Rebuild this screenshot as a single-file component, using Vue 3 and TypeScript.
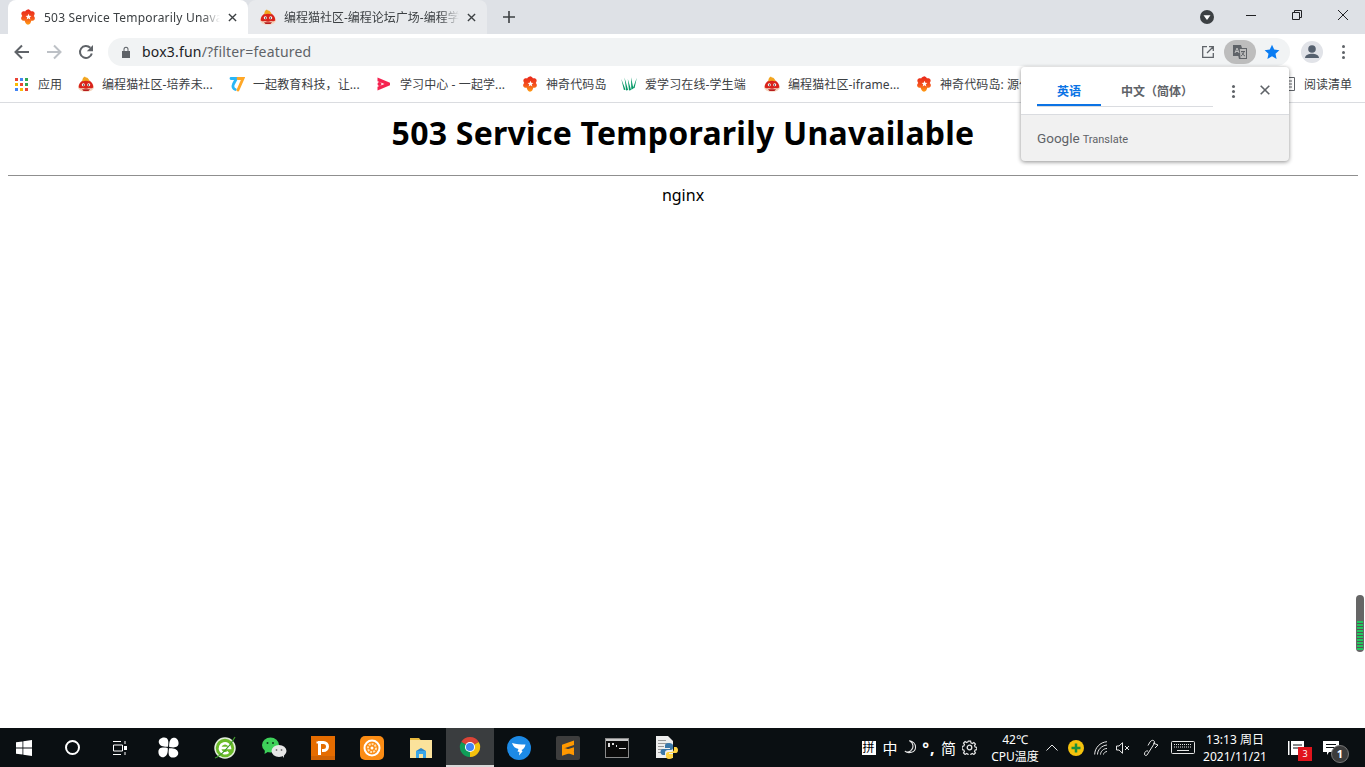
<template>
  <div class="screen">
    <svg class="defs" width="0" height="0" aria-hidden="true">
      <defs>
        <linearGradient id="flowerFill" x1="0" y1="0" x2="0" y2="1">
          <stop offset="0" stop-color="#e8261a" />
          <stop offset="0.55" stop-color="#f4511e" />
          <stop offset="1" stop-color="#ff9d12" />
        </linearGradient>
        <symbol id="flower" viewBox="0 0 16 16">
          <path fill="url(#flowerFill)" d="M8 .3c1.500 0 2.300 1 2.900 2 1.300-.3 2.800-.1 3.500 1.200.6 1.200.1 2.400-.6 3.400.8.900 1.500 2.200.8 3.500-.6 1.200-2 1.500-3.300 1.300C10.900 13.400 10 15.700 8 15.700s-3-2.300-3.300-3.900c-1.300.2-2.700-.1-3.300-1.300-.7-1.300 0-2.600.8-3.500-.7-1-1.200-2.200-.6-3.400.7-1.300 2.200-1.500 3.500-1.200.6-1 1.400-2 2.900-2z" />
          <path fill="#fff" d="M8.500 4.800l.8 1.900 2.100.2-1.600 1.400.5 2.100-1.800-1.100-1.800 1.100.5-2.100L5.600 7l2.100-.2z" />
        </symbol>
        <symbol id="cat" viewBox="0 0 16 16">
          <ellipse cx="8" cy="11" rx="8" ry="4.800" fill="#f4d3bb" />
          <path fill="#d9231b" d="M.8 11.500C.6 7.200 3.500 4 8 4s7.400 3.200 7.200 7.500c-1.300.9-3 1-4.200.6-.9.500-1.800.7-3 .7s-2.100-.2-3-.7c-1.200.4-2.900.3-4.200-.6z" />
          <path fill="#f2a51f" d="M4.500 5.500C4 3.500 5 1 7 .4c.2.700.6 1 1.200 1.100C9.800 1.700 11 3 11.500 5.500c-2-1-5-1-7 0z" />
          <circle cx="5.300" cy="8.800" r="1.500" fill="#fff" />
          <circle cx="10.700" cy="8.800" r="1.500" fill="#fff" />
          <circle cx="5.500" cy="9" r=".7" fill="#222" />
          <circle cx="10.500" cy="9" r=".7" fill="#222" />
          <path fill="#b71c1c" d="M4 13.300h8l-1.500 1.700h-5z" />
        </symbol>
        <symbol id="seventeen" viewBox="0 0 16 16">
          <path fill="none" stroke="#29b6f6" stroke-width="2.800" stroke-linecap="round" d="M2 2.500h5.500L4.500 8c-1.300 2.700-.2 5 1.800 5.500" />
          <path fill="none" stroke="#ffa726" stroke-width="2.800" stroke-linecap="round" d="M9 2.500h5L9 14" />
        </symbol>
        <symbol id="play" viewBox="0 0 16 16">
          <path fill="#f5224f" d="M1.500 1.500l12.500 5.200v2.600L1.500 14.500v-3.700l7-2.800-7-2.800z" />
          <circle cx="3.500" cy="8" r="2" fill="#f5224f" />
        </symbol>
        <symbol id="grass" viewBox="0 0 16 16">
          <path fill="#079a68" d="M.3 3l2.600 11 1.700-.3zM3.500 1.500l1.600 13 2-.4zM6.800 3l1.200 11.500 2.100-.6zM10 1.200l.3 12.500 2.100-1.300zM15.800 1.800l-4 10.800 1.800-.7z" />
        </symbol>
      </defs>
    </svg>

    <header class="tabstrip">
      <div class="tab active">
        <svg class="favicon"><use href="#flower" /></svg>
        <span class="tab-title">503 Service Temporarily Unavailable</span>
        <svg class="tab-close" viewBox="0 0 10 10"><path d="M1 1l8 8M9 1L1 9" /></svg>
      </div>
      <div class="tab">
        <svg class="favicon"><use href="#cat" /></svg>
        <span class="tab-title">编程猫社区-编程论坛广场-编程学习交流</span>
        <svg class="tab-close" viewBox="0 0 10 10"><path d="M1 1l8 8M9 1L1 9" /></svg>
      </div>
      <svg class="new-tab" viewBox="0 0 12 12"><path d="M6 0v12M0 6h12" /></svg>
      <div class="window-controls">
        <svg class="profile-drop" viewBox="0 0 14 14">
          <circle cx="7" cy="7" r="7" fill="#3c4043" />
          <path d="M3.500 5.200h7L7 10z" fill="#fff" />
        </svg>
        <span class="win-btn"><svg viewBox="0 0 10 10"><path d="M0 5.500h10" /></svg></span>
        <span class="win-btn"><svg viewBox="0 0 10 10"><path d="M.5 2.500h7v7h-7zM2.500 2.500v-2h7v7h-2" /></svg></span>
        <span class="win-btn"><svg viewBox="0 0 10 10"><path d="M0 0l10 10M10 0L0 10" /></svg></span>
      </div>
    </header>

    <div class="toolbar">
      <svg class="nav-icon" viewBox="0 0 16 16"><path stroke="#5f6368" d="M15 8H2M8 1.500L1.500 8 8 14.500" /></svg>
      <svg class="nav-icon" viewBox="0 0 16 16"><path stroke="#bdc1c6" d="M1 8h13M8 1.500L14.500 8 8 14.500" /></svg>
      <svg class="nav-icon" viewBox="0 0 16 16">
        <path stroke="#5f6368" d="M13.800 9.500A6 6 0 1 1 12.300 3.800" />
        <path fill="#5f6368" d="M15 1v6.200H8.800z" />
      </svg>
      <div class="omnibox">
        <svg class="lock" viewBox="0 0 10 12">
          <path fill="#5f6368" d="M1 5h8v7H1zM2.500 5V3.300a2.500 2.500 0 0 1 5 0V5H6.500V3.300a1.500 1.500 0 0 0-3 0V5z" />
        </svg>
        <span class="url"><b>box3.fun</b>/?filter=featured</span>
        <svg class="open-ext" viewBox="0 0 12 12">
          <path d="M5 .7H.7v10.600h10.600V7M7 .7h4.300V5M11 1L5 7" />
        </svg>
        <span class="translate-chip">
          <svg viewBox="0 0 16 16">
            <path fill="#5f6368" d="M1 1h8l1 3h5v11H7l-.7-3H1z" />
            <path fill="#bdbdbd" d="M7.800 5H14v9H8.500z" />
            <path fill="none" stroke="#5f6368" d="M9 7.500h4M12 7.500c-.4 2-1.500 3.500-3 4.500M10 8.500c.5 1.500 1.500 2.800 3 3.500" />
            <path fill="none" stroke="#bdbdbd" d="M3 9l2-5 2 5M3.600 7.500h2.800" />
          </svg>
        </span>
        <svg class="star" viewBox="0 0 16 16"><path d="M8 .8l2.200 4.800 5.200.6-3.900 3.500 1.100 5.200L8 12.300l-4.600 2.600 1.100-5.200L.6 6.200l5.200-.6z" /></svg>
      </div>
      <span class="avatar">
        <svg viewBox="0 0 22 22">
          <circle cx="11" cy="8" r="3.800" fill="#55606e" />
          <path fill="#55606e" d="M4 17c0-3 4-4.300 7-4.300s7 1.300 7 4.300z" />
        </svg>
      </span>
      <span class="dots"><i /><i /><i /></span>
    </div>

    <nav class="bookmarks">
      <svg class="apps" viewBox="0 0 13 13">
        <rect v-for="c in appCells" :key="c.k" :x="c.x" :y="c.y" width="3" height="3" :fill="c.fill" />
      </svg>
      <span class="apps-label">应用</span>
      <span v-for="b in bookmarks" :key="b.text" class="bookmark" :style="{ width: b.width + 'px' }">
        <svg class="favicon"><use :href="'#' + b.icon" /></svg>
        <span class="bookmark-text">{{ b.text }}</span>
      </span>
      <span class="reading">
        <svg viewBox="0 0 12 14"><path d="M.5.500h11v13H.500M3 4h6M3 7h6M3 10h6" /></svg>
        阅读清单
      </span>
    </nav>

    <main class="page">
      <h1>503 Service Temporarily Unavailable</h1>
      <hr />
      <p>nginx</p>

      <aside class="translate-popup">
        <div class="popup-top">
          <div class="lang-tabs">
            <span class="lang current">英语</span>
            <span class="lang">中文（简体）</span>
          </div>
          <span class="dots small"><i /><i /><i /></span>
          <svg class="popup-close" viewBox="0 0 10 10"><path d="M.7.700l8.600 8.600M9.300.700L.7 9.300" /></svg>
        </div>
        <div class="popup-bottom"><span class="g">Google</span><span class="t">Translate</span></div>
      </aside>

      <div class="scroll-widget"><span class="stripes" /></div>
    </main>

    <footer class="taskbar">
      <div class="task-group first">
        <span class="task">
          <svg width="16" height="16" viewBox="0 0 16 16"><path fill="#fff" d="M0 2.300l6.500-.9v6.200H0zM7.300 1.300L16 0v7.600H7.300zM0 8.400h6.500v6.200L0 13.700zM7.300 8.400H16V16l-8.700-1.300z" /></svg>
        </span>
        <span class="task"><span class="cortana" /></span>
        <span class="task">
          <svg width="16" height="16" viewBox="0 0 16 16"><path fill="none" stroke="#fff" d="M1 1.500h8M1 14.500h8M1.500 5h9v6h-9zM13 1v3M13 12v3" /><path fill="#fff" d="M12 6h3v4h-3z" /></svg>
        </span>
        <span class="task">
          <svg width="21" height="21" viewBox="0 0 20 20" fill="#fff">
            <path d="M9.500 9.300C6 9.600 1.800 9 .8 5.500.2 2.500 2.800.3 6 .4c3.200.1 4.700 2.500 3.500 8.900z" />
            <path d="M9.500 9.300C6 9.600 1.800 9 .8 5.500.2 2.500 2.800.3 6 .4c3.200.1 4.700 2.500 3.500 8.900z" transform="rotate(90 10 10)" />
            <path d="M9.500 9.300C6 9.600 1.800 9 .8 5.500.2 2.500 2.800.3 6 .4c3.200.1 4.700 2.500 3.500 8.900z" transform="rotate(180 10 10)" />
            <path d="M9.500 9.300C6 9.600 1.800 9 .8 5.500.2 2.500 2.800.3 6 .4c3.200.1 4.700 2.500 3.500 8.900z" transform="rotate(270 10 10)" />
          </svg>
        </span>
      </div>
      <div class="task-group second">
        <span class="task">
          <svg width="24" height="24" viewBox="0 0 24 24">
            <circle cx="12" cy="12" r="10" fill="#6cbb2a" stroke="#e3efdc" stroke-width="1.500" />
            <path fill="none" stroke="#fff" stroke-width="2.600" d="M7 12h10a5 5 0 1 0-1.700 4" />
            <path fill="none" stroke="#3f9a2c" stroke-width="1.200" d="M2 22c4-1 15-11 20-21" />
          </svg>
        </span>
        <span class="task">
          <svg width="26" height="24" viewBox="0 0 26 24">
            <ellipse cx="9.500" cy="9" rx="8.500" ry="7.500" fill="#3ed15a" />
            <path fill="#3ed15a" d="M4 14l-.5 4 4-2.500z" />
            <ellipse cx="18" cy="15" rx="7.500" ry="6" fill="#e6e6e6" />
            <path fill="#e6e6e6" d="M21 19l2 3-.2-5z" />
            <circle cx="6.500" cy="7" r="1" fill="#0b3d18" /><circle cx="12" cy="7" r="1" fill="#0b3d18" />
            <circle cx="15.500" cy="14" r=".9" fill="#777" /><circle cx="20.500" cy="14" r=".9" fill="#777" />
          </svg>
        </span>
        <span class="task">
          <svg width="24" height="24" viewBox="0 0 24 24">
            <rect width="24" height="24" fill="#e56c00" />
            <rect y="20" width="24" height="4" fill="#cf6204" />
            <path fill="none" stroke="#fff" stroke-width="3" d="M8.500 19V6.500h4a4 4 0 0 1 0 8H11" />
            <path fill="#fff" d="M5.500 5.500h4v2h-4z" />
          </svg>
        </span>
        <span class="task">
          <svg width="24" height="24" viewBox="0 0 24 24">
            <rect width="24" height="24" rx="5" fill="#fb8c14" />
            <circle cx="12" cy="12" r="7.500" fill="none" stroke="#fff" stroke-width="2" />
            <circle cx="12" cy="12" r="4" fill="none" stroke="#ffe0b2" stroke-width="2" stroke-dasharray="2 1" />
            <circle cx="12" cy="12" r="1.500" fill="#fff" />
          </svg>
        </span>
        <span class="task">
          <svg width="24" height="22" viewBox="0 0 24 22">
            <path fill="#e8b93e" d="M1 1h9l2 2.500H1z" />
            <path fill="#fbe29b" d="M1 3h22v18H1z" />
            <path fill="#3aa6e8" d="M7 14h10v7H7z" />
            <path fill="#fbe29b" d="M10 17h4v4h-4z" />
            <path fill="#2c86cc" d="M7 14l5-3 5 3z" />
          </svg>
        </span>
        <span class="task running">
          <svg width="22" height="22" viewBox="0 0 24 24">
            <path fill="#db4437" d="M12 12L2.470 6.500A11 11 0 0 1 21.530 6.500z" />
            <path fill="#f4c20d" d="M12 12L2.470 6.500A11 11 0 0 1 21.530 6.500z" transform="rotate(120 12 12)" />
            <path fill="#0f9d58" d="M12 12L2.470 6.500A11 11 0 0 1 21.530 6.500z" transform="rotate(240 12 12)" />
            <circle cx="12" cy="12" r="5.500" fill="#fff" />
            <circle cx="12" cy="12" r="4.400" fill="#4285f4" />
          </svg>
        </span>
        <span class="task">
          <svg width="24" height="24" viewBox="0 0 24 24">
            <circle cx="12" cy="12" r="12" fill="#1c8ae6" />
            <path fill="#fff" d="M5 7c4 1.500 8.500 1.500 13.500 1.500-.5 3-2 4.500-4 5.500l1 1.500-3.500 4 .5-3.500-2-.5 1-2.500C8.500 12.500 6 10.500 5 7z" />
          </svg>
        </span>
        <span class="task">
          <svg width="24" height="24" viewBox="0 0 24 24">
            <rect width="24" height="24" rx="2" fill="#3d3d3d" />
            <path fill="#ff9800" d="M18 4.500v4.500L6 13V8.700zM6 11l12 4.200v4L6 15.300zM6 15l12-3.800v4.500L6 19.800z" />
          </svg>
        </span>
        <span class="task">
          <svg width="24" height="20" viewBox="0 0 24 20">
            <rect x=".5" y=".5" width="23" height="19" fill="#0a0a0a" stroke="#8a8a8a" />
            <path fill="#c9c9c9" d="M1 1h22v2H1z" />
            <path fill="#ddd" d="M3 5h2v4H3zM7 5h2v2H7zM11 7h1v2h-1zM14 10h7v1h-7z" />
          </svg>
        </span>
        <span class="task">
          <svg width="24" height="24" viewBox="0 0 24 24">
            <path fill="#eee" d="M2 0h12l5 5v17H2z" />
            <path fill="#999" d="M4 4h8v1H4zM4 7h10v1H4zM4 10h6v1H4zM4 13h6v1H4zM4 16h6v1H4z" />
            <path fill="#3b77a8" d="M15 7c-3 0-4 1-4 2.500V12h5v1H9c-2 0-2.500 1.500-2.500 3s1 3 2.500 3h2v-2.500c0-1.500 1-2.500 3-2.500h3c1 0 2-1 2-2V9.500C19 8 17.500 7 15 7z" />
            <path fill="#ffd343" d="M15 23c3 0 4-1 4-2.500v-2.500h-4v-1h7c1.500 0 2-1.500 2-3s-1-3-2-3h-2v2.500c0 1.500-1 2.500-3 2.500h-3c-1 0-2 1-2 2v2.500c0 1.500 1 2.500 3 2.500z" />
          </svg>
        </span>
      </div>

      <div class="tray">
        <span class="ime-box">拼</span>
        <span class="ime">中</span>
        <svg class="tray-icon" width="13" height="15" viewBox="0 0 12 14"><path d="M5 .7c4 2 4.500 7 1 9.500-2 1.300-4 1.200-5.300.2 3.300 2.800 10 1.300 10-3.700 0-3-2.500-5.500-5.700-6z" /></svg>
        <span class="ime punct">°,</span>
        <span class="ime">简</span>
        <svg class="tray-icon gear" width="15" height="15" viewBox="0 0 15 15">
          <circle cx="7.500" cy="7.500" r="2.300" />
          <path d="M6.300.7h2.400l.4 1.800 1.500.7 1.600-1 1.700 1.700-1 1.600.7 1.500 1.800.4v2.400l-1.800.4-.7 1.500 1 1.600-1.700 1.700-1.600-1-1.500.7-.4 1.800H6.300l-.4-1.800-1.500-.7-1.600 1-1.700-1.700 1-1.600-.7-1.500-1.800-.4V6.300l1.800-.4.700-1.500-1-1.600 1.700-1.700 1.600 1 1.500-.7z" transform="translate(.5 .5) scale(.93)" />
        </svg>
        <span class="temp"><span>42℃</span><span>CPU温度</span></span>
        <svg class="tray-icon" width="12" height="7" viewBox="0 0 12 7"><path d="M.5 6.500L6 1l5.500 5.500" /></svg>
        <svg width="16" height="16" viewBox="0 0 16 16">
          <circle cx="8" cy="8" r="8" fill="#f4c20d" />
          <path stroke="#1a8f3c" stroke-width="2.500" fill="none" d="M8 3.500v9M3.500 8h9" />
        </svg>
        <svg class="tray-icon" width="14" height="14" viewBox="0 0 14 14"><path d="M.7 13.500C.7 7 6 1.200 13 .7M3.500 13.500C3.500 9 7.500 4.500 13 4M6.500 13.500c0-3 3-6 6.500-6M9.500 13.500c0-1.500 2-3 3.500-3" /></svg>
        <svg class="tray-icon" width="14" height="12" viewBox="0 0 14 12"><path d="M.5 4h2.500L6.500.7v10.600L3 8H.5zM9 4l4 4M13 4l-4 4" /></svg>
        <svg class="tray-icon" width="16" height="18" viewBox="0 0 16 18"><path d="M5 12c-2-.5-3.500 1-3.500 3 0 1.500 1.500 2 2.500 1l7-11c1-1.500.5-3-.5-3.500S8 1.500 7 3L5 6.500M10 4l5 2-3 3" /></svg>
        <svg class="tray-icon" width="24" height="13" viewBox="0 0 24 13">
          <rect x=".5" y=".5" width="23" height="12" rx="1" />
          <path stroke-dasharray="1 1" d="M3 3.500h18M3 6h18" />
          <path d="M6 9.500h12" />
        </svg>
        <span class="clock"><span>13:13 周日</span><span>2021/11/21</span></span>
        <span class="notif">
          <svg width="16" height="16" viewBox="0 0 16 16"><path fill="#fff" d="M3 1h13v14H3zM0 1h1.500v14H0z" /><path stroke="#0a0f12" d="M5 5h9M5 8h9" /></svg>
          <span class="red-badge">3</span>
        </span>
        <span class="notif last">
          <svg width="16" height="16" viewBox="0 0 16 16"><path fill="#fff" d="M0 1h16v11H6l-2 3v-3H0z" /><path stroke="#0a0f12" d="M3 4.500h10M3 7.500h10" /></svg>
          <span class="grey-badge">1</span>
        </span>
      </div>
    </footer>
  </div>
</template>

<script setup lang="ts">
interface Bookmark {
  icon: string;
  text: string;
  width: number;
}

const palette = ["#ea4335", "#4285f4", "#34a853", "#fbbc04", "#ea4335", "#34a853", "#4285f4", "#fbbc04", "#ea4335"];

const appCells = palette.map((fill, i) => ({
  k: i,
  x: (i % 3) * 5,
  y: Math.floor(i / 3) * 5,
  fill,
}));

const bookmarks: Bookmark[] = [
  { icon: "cat", text: "编程猫社区-培养未...", width: 151 },
  { icon: "seventeen", text: "一起教育科技，让...", width: 147 },
  { icon: "play", text: "学习中心 - 一起学...", width: 146 },
  { icon: "flower", text: "神奇代码岛", width: 99 },
  { icon: "grass", text: "爱学习在线-学生端", width: 143 },
  { icon: "cat", text: "编程猫社区-iframe...", width: 152 },
  { icon: "flower", text: "神奇代码岛: 源代码", width: 150 },
];
</script>

<style scoped>
.screen {
  display: flex;
  flex-direction: column;
  width: 1365px;
  height: 767px;
  overflow: hidden;
  font-family: "Noto Sans", "Noto Sans CJK SC", sans-serif;
  background: #fff;
}

.defs {
  position: absolute;
}

.tabstrip {
  display: flex;
  align-items: stretch;
  flex: none;
  height: 34px;
  padding-left: 8px;
  background: #dee1e6;
}

.tab {
  display: flex;
  align-items: center;
  width: 239px;
  padding: 0 11px 0 12px;
  box-sizing: border-box;
  background: #e8eaed;
  border-radius: 8px 8px 0 0;
  color: #3c4043;
  font-size: 12px;
}

.tab.active {
  width: 240px;
  background: #fff;
}

.tab.active .tab-title {
  letter-spacing: 0.2px;
}

.favicon {
  flex: none;
  width: 16px;
  height: 16px;
}

.tab-title {
  flex: 1;
  min-width: 0;
  margin-left: 8px;
  overflow: hidden;
  white-space: nowrap;
  -webkit-mask-image: linear-gradient(to right, #000 90%, transparent);
  mask-image: linear-gradient(to right, #000 90%, transparent);
}

.tab-close {
  flex: none;
  width: 9px;
  height: 9px;
  margin-left: 8px;
  fill: none;
  stroke: #3c4043;
  stroke-width: 1.500;
}

.new-tab {
  align-self: center;
  width: 12px;
  height: 12px;
  margin-left: 16px;
  fill: none;
  stroke: #3c4043;
  stroke-width: 1.600;
}

.window-controls {
  display: flex;
  align-items: center;
  margin-left: auto;
  margin-right: -1px;
}

.profile-drop {
  width: 14px;
  height: 14px;
  margin-right: 14px;
}

.win-btn {
  display: flex;
  align-items: center;
  justify-content: center;
  width: 46px;
  height: 29px;
  margin-bottom: 5px;
}

.win-btn svg {
  width: 10px;
  height: 10px;
  fill: none;
  stroke: #202124;
  stroke-width: 1;
}

.toolbar {
  display: flex;
  align-items: center;
  flex: none;
  height: 32px;
  padding: 4px 0 0 14px;
  box-sizing: border-box;
  background: #fff;
}

.nav-icon {
  flex: none;
  width: 16px;
  height: 16px;
  margin-right: 16px;
  fill: none;
  stroke-width: 2;
}

.omnibox {
  display: flex;
  align-items: center;
  flex: none;
  width: 1182px;
  height: 28px;
  margin-left: -2px;
  padding: 0 8px 0 13px;
  box-sizing: border-box;
  background: #f1f3f4;
  border-radius: 14px;
}

.lock {
  width: 10px;
  height: 12px;
}

.url {
  margin: -2px 0 0 11px;
  font-size: 14px;
  letter-spacing: 0.2px;
  color: #5f6368;
}

.url b {
  font-weight: 400;
  color: #202124;
}

.open-ext {
  width: 12px;
  height: 12px;
  margin-left: auto;
  fill: none;
  stroke: #5f6368;
  stroke-width: 1.300;
}

.translate-chip {
  display: flex;
  align-items: center;
  justify-content: center;
  width: 32px;
  height: 24px;
  margin-left: 10px;
  background: #bdbdbd;
  border-radius: 12px;
}

.translate-chip svg {
  width: 16px;
  height: 16px;
}

.star {
  width: 16px;
  height: 16px;
  margin: 0 2px 0 8px;
  fill: #0a7cf2;
}

.avatar {
  display: flex;
  flex: none;
  width: 22px;
  height: 22px;
  margin-left: 11px;
  border-radius: 50%;
  background: #e1e3e8;
}

.dots {
  display: flex;
  flex-direction: column;
  align-items: center;
  gap: 2.500px;
  margin-left: 19px;
}

.dots i {
  display: block;
  width: 3px;
  height: 3px;
  border-radius: 50%;
  background: #5f6368;
}

.bookmarks {
  position: relative;
  display: flex;
  align-items: center;
  flex: none;
  height: 37px;
  padding-left: 15px;
  box-sizing: border-box;
  border-bottom: 1px solid #dadce0;
  background: #fff;
  font-size: 12px;
  color: #3c4043;
  white-space: nowrap;
}

.apps {
  width: 13px;
  height: 13px;
}

.apps-label {
  width: 40px;
  margin-left: 10px;
}

.bookmark {
  display: flex;
  align-items: center;
  flex: none;
  overflow: hidden;
}

.bookmark-text {
  margin-left: 8px;
  letter-spacing: 0.1px;
}

.reading {
  display: flex;
  align-items: center;
  gap: 9px;
  margin-left: auto;
  padding-right: 13px;
}

.reading svg {
  width: 12px;
  height: 14px;
  fill: none;
  stroke: #5f6368;
}

.page {
  position: relative;
  flex: 1;
  min-height: 0;
  padding: 8px 7px 0 8px;
  color: #000;
  background: #fff;
}

h1 {
  margin: 0 0 20px;
  font-size: 32px;
  font-weight: 700;
  letter-spacing: 0.24px;
  line-height: 44px;
  text-align: center;
}

hr {
  height: 0;
  margin: 0 0 8px;
  border: 0;
  border-top: 1px solid #8f8f8f;
}

p {
  margin: 0;
  font-size: 16px;
  line-height: 22px;
  text-align: center;
}

.translate-popup {
  position: absolute;
  top: -36px;
  left: 1021px;
  width: 268px;
  height: 94px;
  overflow: hidden;
  border-radius: 4px;
  background: #f1f1f1;
  box-shadow: 0 1px 4px rgba(0, 0, 0, 0.45);
}

.popup-top {
  display: flex;
  align-items: flex-start;
  height: 48px;
  padding: 0 16px;
  box-sizing: border-box;
  background: #fff;
  border-bottom: 1px solid #dadce0;
}

.lang-tabs {
  display: flex;
  flex: none;
  width: 176px;
  height: 39px;
  border-bottom: 1px solid #dadce0;
  font-size: 12px;
  font-weight: 700;
  color: #5f6368;
}

.lang {
  padding: 15px 0 0;
  box-sizing: border-box;
  height: 39px;
  width: 112px;
  text-align: center;
}

.lang.current {
  width: 64px;
  color: #0b73e5;
  border-bottom: 2px solid #0b73e5;
}

.dots.small {
  margin: 18px 0 0 19px;
  gap: 2px;
}

.popup-close {
  width: 10px;
  height: 10px;
  margin: 18px 0 0 25px;
  fill: none;
  stroke: #5f6368;
  stroke-width: 1.600;
}

.popup-bottom {
  display: flex;
  align-items: baseline;
  gap: 3px;
  padding: 14px 16px 0;
  color: #5f6368;
  line-height: 18px;
  font-family: Roboto, sans-serif;
}

.popup-bottom .g {
  font-size: 13.500px;
}

.popup-bottom .t {
  font-size: 11px;
}

.scroll-widget {
  position: absolute;
  top: 492px;
  right: 1px;
  width: 8px;
  height: 57px;
  overflow: hidden;
  border-radius: 4px;
  background: #666;
}

.stripes {
  position: absolute;
  left: 1px;
  right: 1px;
  top: 26px;
  bottom: 2px;
  background: repeating-linear-gradient(#22c55e 0 2px, #555 2px 3px);
}

.taskbar {
  display: flex;
  align-items: center;
  flex: none;
  height: 39px;
  background: #0a0f12;
  color: #fff;
}

.task-group {
  display: flex;
}

.task-group.first {
  width: 201px;
}

.task-group.second {
  gap: 1px;
}

.task {
  display: flex;
  align-items: center;
  justify-content: center;
  width: 48px;
  height: 39px;
  box-sizing: border-box;
}

.task.running {
  background: #3a3d3f;
  border-bottom: 2px solid #d8d8d8;
}

.cortana {
  width: 11px;
  height: 11px;
  border: 2.500px solid #fff;
  border-radius: 50%;
}

.tray {
  display: grid;
  grid-template-columns: 21px 22px 19px 18px 21px 20px 10px 52px 22px 26px 24px 20px 36px 28px 76px 46px 28px;
  align-items: center;
  justify-items: center;
  position: absolute;
  left: 858px;
  height: 39px;
  font-size: 12px;
}

.temp {
  grid-column: 8;
}

.tray-icon {
  fill: none;
  stroke: #e6e6e6;
}

.gear {
  stroke-width: 1.300;
}

.ime-box {
  display: flex;
  align-items: center;
  justify-content: center;
  width: 14px;
  height: 14px;
  background: #fff;
  color: #000;
  font-size: 12px;
  line-height: 1;
}

.ime {
  font-size: 15px;
}

.punct {
  font-size: 16px;
  font-weight: 700;
  letter-spacing: 1px;
}

.temp,
.clock {
  display: flex;
  flex-direction: column;
  align-items: center;
  line-height: 17px;
  white-space: nowrap;
}

.notif {
  position: relative;
  display: flex;
}

.notif.last {
  margin-left: -4px;
}

.red-badge {
  position: absolute;
  top: 7px;
  left: 10px;
  width: 14px;
  height: 14px;
  background: #e1141c;
  font-size: 9px;
  line-height: 14px;
  text-align: center;
}

.grey-badge {
  position: absolute;
  top: 5px;
  left: 8px;
  width: 16px;
  height: 16px;
  border-radius: 50%;
  background: #3c3c3c;
  border: 1px solid #777;
  font-size: 11px;
  font-weight: 700;
  line-height: 16px;
  text-align: center;
}
</style>

<style>
html,
body {
  margin: 0;
  overflow: hidden;
  background: #fff;
}
</style>
